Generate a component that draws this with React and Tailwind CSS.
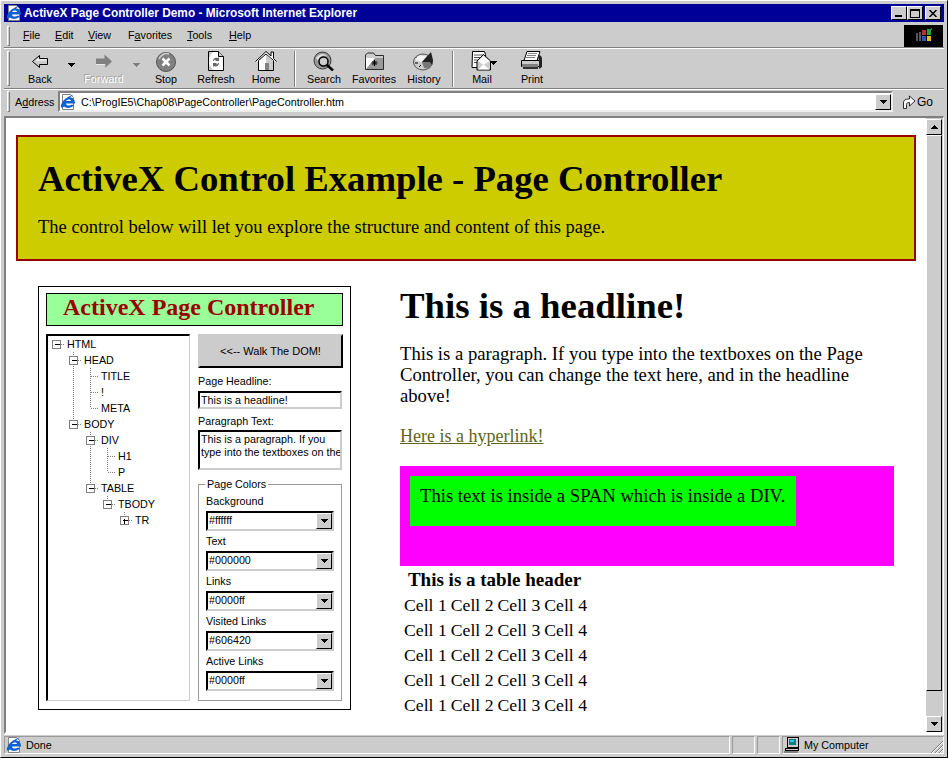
import React from "react";

const raised = "border border-t-white border-l-white border-r-black border-b-black";
const inset = "border-2 border-t-black border-l-black border-r-[#cccccc] border-b-[#cccccc]";
const statusCell = "h-[18px] border border-t-[#999999] border-l-[#999999] border-r-white border-b-white";

const Grip = () => (
  <div className="w-[3px] h-full border border-t-white border-l-white border-r-[#808080] border-b-[#808080] shrink-0" />
);

const Sep = () => (
  <div className="w-[8px] h-[36px] flex justify-center shrink-0">
    <div className="w-[2px] h-full border-l border-l-[#808080] border-r border-r-white" />
  </div>
);

const Caret = ({ color = "#000000" }) => (
  <svg width="7" height="4" viewBox="0 0 7 4" shapeRendering="crispEdges"><path d="M0 0h7L3.500 4z" fill={color} /></svg>
);

const IeIcon = () => (
  <svg width="16" height="16" viewBox="0 0 16 16" className="shrink-0">
    <path d="M2.500 .5h8l3 3v12h-11z" fill="#ffffff" stroke="#808080" />
    <path d="M1 14C0 9 5 3 14 .5c-2 1-3 2-4 3 3 0 5 2 5 6H6c0 2 3 3 6 1l2 1c-3 3-8 3-10 1-1 1-2 1-3 1z" fill="#1060d0" />
    <path d="M6 7h5c0-2-4-2-5 0z" fill="#ffffff" />
  </svg>
);

const BackIcon = () => (
  <svg width="18" height="20" viewBox="0 0 18 20"><path d="M1.500 10.500L8.500 4.500v3h8v6h-8v3z" fill="#cccccc" stroke="#000000" /><path d="M3.500 10.500L7.500 7v1.500h8v1H4z" fill="#ffffff" /></svg>
);
const ForwardIcon = () => (
  <svg width="18" height="20" viewBox="0 0 18 20"><path d="M17 10.500L9.500 3.500v4H1v6h8.500v4z" fill="#808080" /><path d="M1 14h8.500v4l.8-.8V13H1z" fill="#e8e8e8" /></svg>
);
const StopIcon = () => (
  <svg width="22" height="22" viewBox="0 0 22 22"><circle cx="11" cy="11" r="9.500" fill="#808080" stroke="#555555" /><path d="M4 8a8 8 0 0 1 10-5" stroke="#cccccc" strokeWidth="1.500" fill="none" /><path d="M7.500 7.500l7 7M14.500 7.500l-7 7" stroke="#ffffff" strokeWidth="2.600" /></svg>
);
const RefreshIcon = () => (
  <svg width="18" height="20" viewBox="0 0 18 20"><path d="M1.500 .5h10l5 5v14h-15z" fill="#ffffff" stroke="#000000" /><path d="M2 1h4L2 7zM2 13l4 6H2z" fill="#cccccc" /><path d="M11.500 .5v5h5" fill="#cccccc" stroke="#000000" /><path d="M6 10c0-3 3-4 5-3l1-1v4H8l1-1c-1-.5-2 0-2 1zM12 12c0 3-3 4-5 3l-1 1v-4h4l-1 1c1 .5 2 0 2-1z" fill="#666666" /></svg>
);
const HomeIcon = () => (
  <svg width="22" height="20" viewBox="0 0 22 20"><path d="M.5 10.500L11 .5l5 4.500V1h2.500v6.500l3 3" fill="#ffffff" stroke="#000000" /><path d="M3.500 9.500v10h15v-10L11 3z" fill="#ffffff" stroke="#000000" /><path d="M11 3.500l7 6.500v9h-7z" fill="#cccccc" /><rect x="10" y="12" width="4" height="7" fill="#808080" /></svg>
);
const SearchIcon = () => (
  <svg width="22" height="20" viewBox="0 0 22 20"><circle cx="9.500" cy="9.500" r="8.500" fill="#999999" stroke="#333333" /><path d="M3 7c3-5 9-5 11-2-4-1-8 0-9 5z" fill="#dddddd" /><circle cx="10.500" cy="10.500" r="4.500" fill="#cccccc" stroke="#000000" strokeWidth="1.500" /><path d="M14 14l6 5.500" stroke="#000000" strokeWidth="2.500" /></svg>
);
const FavoritesIcon = () => (
  <svg width="21" height="20" viewBox="0 0 21 20"><path d="M1.500 6.500V4l2-2h6l2 2.500h8v14h-18z" fill="#cccccc" stroke="#000000" strokeWidth="0.800" /><path d="M2 7h17v11H2z" fill="#999999" /><path d="M2 7h9L2 18z" fill="#ffffff" /><path d="M10.500 9v6M7.500 12h6M8.500 10l4 4M12.500 10l-4 4" stroke="#000000" /></svg>
);
const HistoryIcon = () => (
  <svg width="22" height="20" viewBox="0 0 22 20"><ellipse cx="10" cy="11" rx="9.500" ry="8" fill="#cccccc" stroke="#555555" /><path d="M3 7h3M2 12h3M6 16l2-2M10 4v3" stroke="#000000" /><path d="M2 9c3-6 9-5 11-4l-4 6z" fill="#f4f4f4" /><path d="M9 11L18 1l2 8-1 5z" fill="#222222" /><path d="M9 11h8l2 3-3 4-5-1z" fill="#777777" /></svg>
);
const MailIcon = () => (
  <svg width="22" height="20" viewBox="0 0 22 20"><path d="M1.500 .5h12l1 3v13h-13.500z" fill="#ffffff" stroke="#000000" /><path d="M3 4h10M3 6.500h10M3 9h8M3 11.500h6" stroke="#555555" /><path d="M6 10l6.500-6.500L19.500 10v9H6z" fill="#cccccc" stroke="#000000" /><path d="M7 18.500l5.500-5 6 5H7zM7 10l5.500 4 6-4-6-5z" fill="#ffffff" /></svg>
);
const PrintIcon = () => (
  <svg width="22" height="20" viewBox="0 0 22 20"><path d="M6 .5h13l-3 9H3z" fill="#ffffff" stroke="#000000" /><path d="M7 2.500h9M6 4.500h9M5 6.500h9" stroke="#808080" /><path d="M.5 9.500h18v6H.5z" fill="#cccccc" stroke="#000000" /><path d="M17 4c3 0 4 2 4 4v8l-3 2v-8z" fill="#222222" /><path d="M1 13h16v3H1z" fill="#808080" /><path d="M2 16h15v2H2z" fill="#333333" /></svg>
);
const GoIcon = () => (
  <svg width="14" height="16" viewBox="0 0 14 16"><path d="M1.500 14.500V9c0-3 2-4 6-4V2l5.500 5-5.500 5V8.500c-2 0-3 .5-3 2v4z" fill="#ffffff" stroke="#000000" strokeWidth="0.800" /></svg>
);
const ComputerIcon = () => (
  <svg width="17" height="16" viewBox="0 0 17 16" shapeRendering="crispEdges"><path d="M3 0h11v10H3z" fill="#cccccc" stroke="#000000" /><path d="M5 2h7v6H5z" fill="#008080" /><path d="M6 3h4v2H6z" fill="#40c0e0" /><path d="M1 11h13v2H1z" fill="#cccccc" stroke="#000000" /><path d="M0 14h14v2H0z" fill="#808080" /></svg>
);
const WinLogo = () => (
  <svg width="18" height="16" viewBox="0 0 18 16" shapeRendering="crispEdges"><path d="M1 5h2v8H1zM4 4h2v9H4z" fill="#555566" /><path d="M7 2h4v5H7z" fill="#c03020" /><path d="M12 1h4v6h-4z" fill="#20a040" /><path d="M7 8h4v5H7z" fill="#3050c0" /><path d="M12 8h4v5h-4z" fill="#e0c020" /><path d="M16 0h1v2h-1z" fill="#108030" /></svg>
);

const tools = [
  { label: "Back", icon: <BackIcon />, w: "w-[50px]" },
  { caret: true, w: "w-[12px]" },
  { label: "Forward", icon: <ForwardIcon />, w: "w-[54px]", disabled: true },
  { caret: true, disabled: true, w: "w-[10px]" },
  { label: "Stop", icon: <StopIcon />, w: "w-[50px]" },
  { label: "Refresh", icon: <RefreshIcon />, w: "w-[50px]" },
  { label: "Home", icon: <HomeIcon />, w: "w-[50px]" },
  { sep: true },
  { label: "Search", icon: <SearchIcon />, w: "w-[50px]" },
  { label: "Favorites", icon: <FavoritesIcon />, w: "w-[50px]" },
  { label: "History", icon: <HistoryIcon />, w: "w-[50px]" },
  { sep: true },
  { label: "Mail", icon: <MailIcon />, w: "w-[50px]", mail: true },
  { label: "Print", icon: <PrintIcon />, w: "w-[50px]" },
];

const treeRows = [
  { label: "HTML", level: 0, box: "minus" },
  { label: "HEAD", level: 1, box: "minus" },
  { label: "TITLE", level: 2 },
  { label: "!", level: 2 },
  { label: "META", level: 2 },
  { label: "BODY", level: 1, box: "minus" },
  { label: "DIV", level: 2, box: "minus" },
  { label: "H1", level: 3 },
  { label: "P", level: 3 },
  { label: "TABLE", level: 2, box: "minus" },
  { label: "TBODY", level: 3, box: "minus" },
  { label: "TR", level: 4, box: "plus" },
];

// does another row at this level follow before the branch closes
const continues = (i, level) => {
  for (let j = i + 1; j < treeRows.length; j++) {
    if (treeRows[j].level < level) return false;
    if (treeRows[j].level === level) return true;
  }
  return false;
};

const TreeRow = ({ row, index }) => {
  const width = 19 + 17 * row.level;
  const cx = 8.5 + 17 * row.level;
  const guides = [];
  for (let k = 1; k < row.level; k++) {
    if (continues(index, k)) guides.push(8.5 + 17 * k);
  }
  return (
    <div className="flex h-[16px] items-center">
      <svg width={width} height="16" className="shrink-0" shapeRendering="crispEdges">
        {guides.map((x) => (
          <path key={x} d={`M${x} 0V16`} stroke="#808080" strokeDasharray="1 1" />
        ))}
        {row.level > 0 && (
          <path d={`M${cx} 0V${continues(index, row.level) ? 16 : 8}`} stroke="#808080" strokeDasharray="1 1" />
        )}
        <path d={`M${cx} 8.5H${width - 2}`} stroke="#808080" strokeDasharray="1 1" />
        {row.box && <rect x={cx - 4} y="4.500" width="8" height="8" fill="#ffffff" stroke="#808080" />}
        {row.box && <path d={`M${cx - 2} 8.500h5`} stroke="#000000" />}
        {row.box === "plus" && <path d={`M${cx} 6.500v5`} stroke="#000000" />}
      </svg>
      <span>{row.label}</span>
    </div>
  );
};

const colors = [
  ["Background", "#ffffff"],
  ["Text", "#000000"],
  ["Links", "#0000ff"],
  ["Visited Links", "#606420"],
  ["Active Links", "#0000ff"],
];

const ComboButton = () => (
  <div className={`w-[16px] h-[16px] bg-[#cccccc] ${raised} flex items-center justify-center shrink-0`}>
    <Caret />
  </div>
);

const ColorField = ({ label, value }) => (
  <div className="h-[40px]">
    <div className="h-[20px] leading-[20px]">{label}</div>
    <div className={`h-[20px] bg-white ${inset} flex items-center justify-between pl-[1px]`}>
      <span className="pb-px">{value}</span>
      <ComboButton />
    </div>
  </div>
);

const PageController = () => (
  <div className="w-[313px] h-[424px] border border-black px-[7px] pt-[6px] font-['Liberation_Sans',sans-serif] text-[10.75px] text-black">
    <div className="h-[33px] border border-black bg-[#99ff99] pl-[16px] font-['Liberation_Serif',serif] font-bold text-[24px] leading-[26px] text-[#990000]">
      ActiveX Page Controller
    </div>
    <div className="flex gap-[8px] mt-[8px]">
      <div className="w-[144px] h-[367px] border-t-2 border-l-2 border-r border-b border-t-black border-l-black border-r-[#cccccc] border-b-[#cccccc]">
        {treeRows.map((row, i) => <TreeRow key={i} row={row} index={i} />)}
      </div>
      <div className="w-[145px]">
        <div className="h-[34px] bg-[#cccccc] border-2 border-t-[#cccccc] border-l-[#cccccc] border-r-black border-b-black flex items-center justify-center text-[11px]">
          &lt;&lt;-- Walk The DOM!
        </div>
        <div className="h-[22px] pt-[6px] leading-[14px]">Page Headline:</div>
        <div className={`h-[18px] w-[144px] ${inset} pl-[1px] leading-[14px] mt-[1px]`}>This is a headline!</div>
        <div className="h-[21px] pt-[4px] leading-[16px]">Paragraph Text:</div>
        <div className={`h-[40px] w-[144px] ${inset} pl-[1px] pt-[1px] leading-[13px] whitespace-nowrap overflow-hidden`}>
          This is a paragraph. If you<br />type into the textboxes on the
        </div>
        <fieldset className="w-[144px] h-[224px] mt-[7px] border border-[#999999] px-[7px]">
          <legend className="-ml-[1px] px-[2px] leading-[14px]">Page Colors</legend>
          {colors.map(([label, value]) => <ColorField key={label} label={label} value={value} />)}
        </fieldset>
      </div>
    </div>
  </div>
);

const Article = () => (
  <div className="w-[494px] font-['Liberation_Serif',serif] text-black">
    <h1 className="font-bold text-[36.8px] leading-[43px]">This is a headline!</h1>
    <p className="text-[18.67px] leading-[21px] mt-[16px]">
      This is a paragraph. If you type into the textboxes on the Page Controller, you can change the text here, and in the headline above!
    </p>
    <p className="text-[18px] leading-[21px] mt-[20px]">
      <a href="#" className="underline text-[#606420]">Here is a hyperlink!</a>
    </p>
    <div className="h-[100px] bg-[#ff00ff] p-[10px] mt-[19px]">
      <div className="w-[386px] h-[50px] bg-[#00ff00] px-[10px] pt-[9px] text-[18.67px] leading-[21px]">
        This text is inside a SPAN which is inside a DIV.
      </div>
    </div>
    <table className="ml-px border-separate border-spacing-[2px] text-[17.7px] leading-[21px]">
      <tbody>
        <tr>
          <th colSpan={4} className="p-px pr-[3px] font-bold text-center text-[19px]">This is a table header</th>
        </tr>
        {[0, 1, 2, 3, 4].map((r) => (
          <tr key={r}>
            {["Cell 1", "Cell 2", "Cell 3", "Cell 4"].map((c) => (
              <td key={c} className="px-px pt-[2px]">{c}</td>
            ))}
          </tr>
        ))}
      </tbody>
    </table>
  </div>
);

const ScrollButton = ({ up }) => (
  <div className={`w-[16px] h-[16px] bg-[#cccccc] ${raised} flex items-center justify-center shrink-0`}>
    <div className={up ? "rotate-180 flex" : "flex"}><Caret /></div>
  </div>
);

export default function App() {
  return (
    <div className="w-[948px] h-[758px] bg-[#cccccc] overflow-hidden flex flex-col px-[3px] pt-[3px] border-l border-t border-white border-r-black border-b-black border-r border-b font-['Liberation_Sans',sans-serif] text-[10.75px] text-black">
      {/* title bar */}
      <div className="h-[18px] bg-[#000099] flex items-center pl-[2px] pr-[3px] shrink-0">
        <IeIcon />
        <span className="ml-[2px] pt-px font-bold text-[11.85px] text-white">ActiveX Page Controller Demo - Microsoft Internet Explorer</span>
        <div className="ml-auto flex">
          <div className={`w-[16px] h-[14px] bg-[#cccccc] ${raised} flex items-end pl-[3px] pb-[2px]`}><div className="w-[7px] h-[2px] bg-black" /></div>
          <div className={`w-[16px] h-[14px] bg-[#cccccc] ${raised} flex items-center justify-center`}><div className="w-[10px] h-[9px] border border-t-2 border-black" /></div>
          <div className={`w-[16px] h-[14px] ml-[2px] bg-[#cccccc] ${raised} flex items-center justify-center`}>
            <svg width="8" height="7" viewBox="0 0 8 7"><path d="M.5 0l7 7M7.500 0l-7 7" stroke="#000000" strokeWidth="1.500" /></svg>
          </div>
        </div>
      </div>

      {/* menu bar */}
      <div className="h-[23px] mt-[3px] flex items-stretch border-b border-b-[#808080] shrink-0">
        <div className="py-[1px] pl-[3px]"><Grip /></div>
        <div className="flex items-center pl-[13px] pb-[1px]">
          <span className="w-[32px]"><span className="underline">F</span>ile</span>
          <span className="w-[33px]"><span className="underline">E</span>dit</span>
          <span className="w-[40px]"><span className="underline">V</span>iew</span>
          <span className="w-[59px]">F<span className="underline">a</span>vorites</span>
          <span className="w-[42px]"><span className="underline">T</span>ools</span>
          <span><span className="underline">H</span>elp</span>
        </div>
        <div className="ml-auto w-[39px] h-[22px] mr-[1px] bg-black flex items-center justify-center"><WinLogo /></div>
      </div>

      {/* toolbar */}
      <div className="h-[41px] flex border-t border-t-white border-b border-b-[#808080] shrink-0">
        <div className="py-[2px] pl-[3px]"><Grip /></div>
        <div className="flex pl-[5px] items-start pt-[2px]">
          {tools.map((t, i) => {
            if (t.sep) return <Sep key={i} />;
            if (t.caret) {
              return (
                <div key={i} className={`${t.w} h-[36px] flex justify-center pt-[12px]`}>
                  <div className="h-[4px]"><Caret color={t.disabled ? "#808080" : "#000000"} /></div>
                </div>
              );
            }
            return (
              <div key={i} className={`${t.w} h-[36px] flex flex-col items-center relative`}>
                <div className="h-[22px] shrink-0 flex items-start justify-center">{t.icon}</div>
                <span className={t.disabled ? "leading-[13px] text-white [text-shadow:-1px_-1px_0_#a0a0a0]" : "leading-[13px]"}>{t.label}</span>
                {t.mail && <div className="absolute left-[33px] top-[10px] flex"><Caret /></div>}
              </div>
            );
          })}
        </div>
      </div>

      {/* address bar */}
      <div className="h-[24px] flex items-center border-t border-t-white shrink-0">
        <div className="h-[21px] pl-[3px]"><Grip /></div>
        <span className="ml-[5px] w-[43px] pt-px">A<span className="underline">d</span>dress</span>
        <div className="w-[835px] h-[21px] bg-white border-2 border-t-[#808080] border-l-[#808080] border-r-[#eeeeee] border-b-[#eeeeee] flex items-center">
          <IeIcon />
          <span className="ml-[5px] pt-px">C:\ProgIE5\Chap08\PageController\PageController.htm</span>
          <div className="ml-auto"><ComboButton /></div>
        </div>
        <div className="ml-[9px] flex items-center gap-[1px] text-[12px]">
          <GoIcon />
          <span>Go</span>
        </div>
      </div>

      {/* browser content */}
      <div className="h-[618px] mt-[3px] flex border-t-2 border-l-2 border-r border-b-2 border-t-[#808080] border-l-[#808080] border-r-white border-b-white shrink-0">
        <div className="flex-1 bg-white px-[10px] pt-[17px] min-w-0">
          <div className="h-[126px] bg-[#cccc00] border-2 border-[#990000] pl-[20px] pt-[20px] font-['Liberation_Serif',serif]">
            <h1 className="font-bold text-[36.7px] leading-[43px]">ActiveX Control Example - Page Controller</h1>
            <p className="text-[18.5px] leading-[21px] mt-[17px]">The control below will let you explore the structure and content of this page.</p>
          </div>
          <div className="flex mt-[25px] pl-[22px]">
            <PageController />
            <div className="ml-[49px] -mt-[2px]"><Article /></div>
          </div>
        </div>
        <div className="w-[17px] flex flex-col bg-[#cccccc] pt-[1px]">
          <ScrollButton up />
          <div className={`h-[556px] w-[16px] bg-[#cccccc] ${raised}`} />
          <div className="flex-1" />
          <ScrollButton />
        </div>
      </div>

      {/* status bar */}
      <div className="h-[21px] flex items-center gap-[2px] shrink-0 border-t border-t-white">
        <div className={`flex items-center pl-[1px] flex-1 ${statusCell}`}><IeIcon /><span className="ml-[4px]">Done</span></div>
        <div className={`w-[23px] ${statusCell}`} />
        <div className={`w-[23px] ${statusCell}`} />
        <div className={`w-[162px] flex items-center pl-[1px] ${statusCell} border-r-[#cccccc] border-b-[#cccccc]`}>
          <ComputerIcon />
          <span className="ml-[3px]">My Computer</span>
          <svg width="13" height="13" viewBox="0 0 13 13" className="ml-auto self-end"><path d="M1 13L13 1M5 13l8-8M9 13l4-4" stroke="#808080" /><path d="M2 13L13 2M6 13l7-7M10 13l3-3" stroke="#ffffff" /></svg>
        </div>
      </div>
    </div>
  );
}
